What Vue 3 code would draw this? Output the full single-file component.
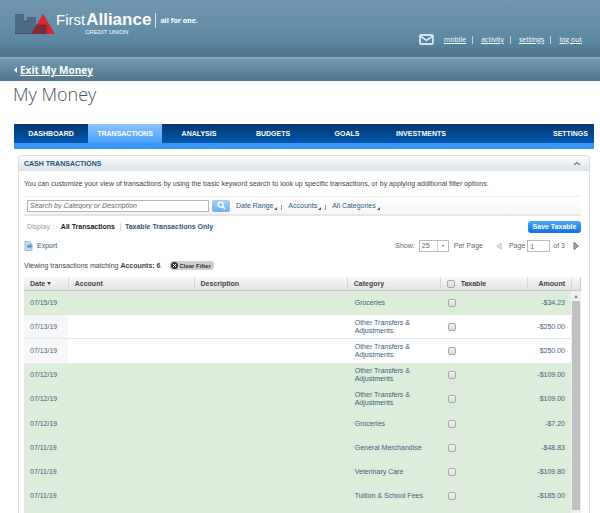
<template>
  <div class="page">
    <header class="top-header">
      <a class="logo" href="#">
        <svg class="logo-mark" viewBox="0 0 40 20" aria-hidden="true">
          <path d="M0 0h9v7h3V3h9v6L17 20H0z" fill="#4b6b82" />
          <path d="M28 0L40 20H16z" fill="#d52535" />
          <path d="M21 11h10v9H16z" fill="#7d2a3a" />
          <path d="M0 19.5h17M9.500 7h3M21 11h10v9" fill="none" stroke="#5c2836" stroke-width="1" stroke-dasharray="1 1" />
        </svg>
        <span class="logo-text">
          <span class="logo-name"><span class="logo-first">First</span><b>Alliance</b></span>
          <span class="logo-sub">CREDIT UNION</span>
        </span>
        <span class="logo-tag">all for one.</span>
      </a>
      <nav class="user-links">
        <svg class="mail" viewBox="0 0 15 11" aria-hidden="true">
          <rect x="1" y="1" width="13" height="9" rx="1" fill="none" stroke="#fff" stroke-width="1.4" />
          <path d="M2 2.500L7.500 6.500L13 2.500" fill="none" stroke="#fff" stroke-width="1.400" />
        </svg>
        <a v-for="link in userLinks" :key="link" href="#">{{ link }}</a>
      </nav>
    </header>

    <div class="exit-bar">
      <svg viewBox="0 0 3 6" aria-hidden="true"><path d="M3 0v6L0 3z" fill="#fff" /></svg>
      <a href="#">Exit My Money</a>
    </div>

    <h1>My Money</h1>

    <main>
      <nav class="tabs">
        <a v-for="tab in tabs" :key="tab" href="#" :class="{ active: tab === activeTab }" @click.prevent="activeTab = tab">{{ tab }}</a>
        <a href="#" class="tab-settings">SETTINGS</a>
      </nav>

      <section class="panel">
        <div class="panel-header">
          <h2>CASH TRANSACTIONS</h2>
          <button aria-label="Collapse">
            <svg viewBox="0 0 8 5"><path d="M1 4L4 1.500L7 4" fill="none" stroke="#5f7f9c" stroke-width="1.300" /></svg>
          </button>
        </div>

        <div class="panel-body">
          <p class="intro">
            You can customize your view of transactions by using the basic keyword search to look up specific
            transactions, or by applying additional filter options.
          </p>

          <div class="filters">
            <input v-model="keyword" type="text" class="search" aria-label="Search" placeholder="Search by Category or Description" />
            <button class="search-btn" aria-label="Search">
              <svg viewBox="0 0 10 10">
                <circle cx="4" cy="4" r="2.800" fill="none" stroke="#fff" stroke-width="1.400" />
                <path d="M6 6L9 9" stroke="#fff" stroke-width="1.600" />
              </svg>
            </button>
            <button v-for="filter in filters" :key="filter" class="filter">
              {{ filter }}<svg viewBox="0 0 3 3"><path d="M3 0v3H0z" fill="#555" /></svg>
            </button>
          </div>

          <div class="display">
            <span class="muted">Display :</span>
            <a href="#" class="current">All Transactions</a>
            <a href="#" class="taxable-only">Taxable Transactions Only</a>
            <button class="save">Save Taxable</button>
          </div>

          <div class="paging">
            <a href="#" class="export">
              <svg viewBox="0 0 9 10" aria-hidden="true">
                <path d="M1 .5h4.500L8 3v6.500H1z" fill="#c5def3" stroke="#82afd6" stroke-width=".8" />
                <path d="M3 4h2.500V2.500L8.500 5.500L5.500 8V6.500H3z" fill="#6397c6" />
              </svg>
              Export
            </a>
            <label for="perPage">Show:</label>
            <span class="select-box">
              <select id="perPage" v-model="perPage">
                <option>25</option>
                <option>50</option>
              </select>
              <svg viewBox="0 0 4 3" aria-hidden="true"><path d="M0 0h4L2 3z" fill="#777" /></svg>
            </span>
            <span class="per-page">Per Page</span>
            <button class="arrow" aria-label="Previous page">
              <svg viewBox="0 0 6 8"><path d="M5 1v6L1 4z" fill="#eee" stroke="#aaa" stroke-width=".8" /></svg>
            </button>
            <label for="pageNumber" class="page-label">Page</label>
            <input id="pageNumber" v-model="pageNumber" type="text" />
            <span class="of">of 3</span>
            <button class="arrow" aria-label="Next page">
              <svg viewBox="0 0 6 8"><path d="M1 .5v7L5.500 4z" fill="#aaa" stroke="#555" stroke-width=".8" /></svg>
            </button>
          </div>

          <div class="viewing">
            <span>Viewing transactions matching <b>Accounts: 6</b>.</span>
            <button class="clear">
              <svg viewBox="0 0 7 7"><circle cx="3.500" cy="3.500" r="3.500" fill="#3b3035" /><path d="M2 2l3 3M5 2L2 5" stroke="#fff" /></svg>
              Clear Filter
            </button>
          </div>

          <div class="grid">
            <table>
              <thead>
                <tr>
                  <th class="col-date">
                    Date<svg viewBox="0 0 4 3"><path d="M0 0h4L2 3z" fill="#444" /></svg>
                  </th>
                  <th class="col-account">Account</th>
                  <th class="col-description">Description</th>
                  <th class="col-category">Category</th>
                  <th class="col-taxable">
                    <label><input v-model="allTaxable" type="checkbox" />Taxable</label>
                  </th>
                  <th class="col-amount">Amount</th>
                </tr>
              </thead>
              <tbody>
                <tr v-for="(row, i) in rows" :key="i" :class="{ green: row.green }">
                  <td>{{ row.date }}</td>
                  <td></td>
                  <td></td>
                  <td class="category">{{ row.category }}</td>
                  <td class="check">
                    <input v-if="row.date" v-model="row.taxable" type="checkbox" aria-label="Taxable" />
                  </td>
                  <td class="amount">{{ row.amount }}</td>
                </tr>
              </tbody>
            </table>
            <div class="scroll">
              <div class="scroll-cap"></div>
              <div class="scroll-up">
                <svg viewBox="0 0 4 3"><path d="M0 3h4L2 0z" fill="#888" /></svg>
              </div>
              <div class="scroll-thumb"></div>
            </div>
          </div>
        </div>
      </section>
    </main>
  </div>
</template>

<script setup>
import { ref } from 'vue'

const userLinks = ['mobile', 'activity', 'settings', 'log out']
const tabs = ['DASHBOARD', 'TRANSACTIONS', 'ANALYSIS', 'BUDGETS', 'GOALS', 'INVESTMENTS']
const filters = ['Date Range', 'Accounts', 'All Categories']

const activeTab = ref('TRANSACTIONS')
const keyword = ref('')
const perPage = ref('25')
const pageNumber = ref('1')
const allTaxable = ref(false)

const rows = ref([
  { date: '07/15/19', category: 'Groceries', amount: '-$34.23', green: true, taxable: false },
  { date: '07/13/19', category: 'Other Transfers & Adjustments', amount: '-$250.00', green: false, taxable: false },
  { date: '07/13/19', category: 'Other Transfers & Adjustments', amount: '$250.00', green: false, taxable: false },
  { date: '07/12/19', category: 'Other Transfers & Adjustments', amount: '-$109.00', green: true, taxable: false },
  { date: '07/12/19', category: 'Other Transfers & Adjustments', amount: '$109.00', green: true, taxable: false },
  { date: '07/12/19', category: 'Groceries', amount: '-$7.20', green: true, taxable: false },
  { date: '07/11/19', category: 'General Merchandise', amount: '-$48.83', green: true, taxable: false },
  { date: '07/11/19', category: 'Veterinary Care', amount: '-$109.80', green: true, taxable: false },
  { date: '07/11/19', category: 'Tuition & School Fees', amount: '-$185.00', green: true, taxable: false },
  { date: '', category: '', amount: '', green: true, taxable: false }
])
</script>

<style>
body {
  margin: 0;
  background: #fff;
}
</style>

<style scoped>
* {
  box-sizing: border-box;
}

.page {
  display: flex;
  flex-direction: column;
  height: 100vh;
  overflow: hidden;
  font-family: 'Liberation Sans', Arial, sans-serif;
  font-size: 7px;
  line-height: 8px;
  color: #444;
}

button,
input,
select {
  margin: 0;
  padding: 0;
  border: 0;
  background: none;
  font: inherit;
  color: inherit;
}

button {
  cursor: pointer;
}

a {
  color: #2f5878;
  text-decoration: none;
}

svg {
  display: block;
}

.top-header {
  display: flex;
  flex: none;
  justify-content: space-between;
  height: 57px;
  padding: 0 18px 0 15px;
  background: linear-gradient(#7196af, #6990a9 40%, #5b87a0 72%, #4f728a);
}

.logo {
  display: flex;
  align-items: flex-start;
  padding-top: 10px;
  color: #fff;
}

.logo-mark {
  width: 40px;
  height: 20px;
  margin-top: 4px;
}

.logo-text {
  display: flex;
  flex-direction: column;
  margin-left: 1px;
  padding-right: 4px;
}

.logo-name {
  font-size: 17px;
  line-height: 19px;
}

.logo-first {
  margin-right: 1px;
  font-size: 15px;
}

.logo-sub {
  padding-left: 29px;
  font-size: 6px;
  line-height: 7px;
}

.logo-tag {
  margin-top: 3px;
  padding-left: 4px;
  border-left: 1px solid #dce6ec;
  font-family: 'Open Sans', sans-serif;
  font-size: 7px;
  font-weight: bold;
  line-height: 15px;
}

.user-links {
  display: flex;
  align-items: center;
  padding-top: 22px;
  font-family: 'Open Sans', sans-serif;
  font-size: 7px;
}

.user-links a {
  color: #fff;
  text-decoration: underline;
}

.user-links a + a {
  margin-left: 6px;
  padding-left: 8px;
  border-left: 1px solid #c4d4de;
}

.mail {
  width: 15px;
  height: 11px;
  margin-right: 10px;
}

.exit-bar {
  display: flex;
  flex: none;
  align-items: center;
  gap: 3px;
  height: 24px;
  padding-left: 14px;
  border-top: 2px solid #89a6b8;
  background: linear-gradient(#7398ae, #50758d);
}

.exit-bar svg {
  width: 3px;
  height: 6px;
}

.exit-bar a {
  color: #fff;
  font-family: 'Open Sans', sans-serif;
  font-size: 10px;
  font-weight: bold;
  line-height: 14px;
  text-decoration: underline;
}

h1 {
  flex: none;
  margin: 0;
  padding-left: 13px;
  height: 43px;
  color: #4a5058;
  font-family: 'Open Sans', sans-serif;
  font-size: 18px;
  font-weight: 300;
  line-height: 26px;
}

main {
  display: flex;
  flex: 1;
  flex-direction: column;
  min-height: 0;
  margin: 0 6px 0 14px;
}

.tabs {
  display: flex;
  flex: none;
  height: 25px;
  border-bottom: 6px solid #3a97fb;
  background: linear-gradient(#02376f, #0057ae);
  font-weight: bold;
  line-height: 19px;
  text-align: center;
}

.tabs a {
  flex: 0 1 74px;
  color: #fff;
}

.tabs .active {
  background: linear-gradient(#8ac4ff, #4a9ff9);
}

.tabs .tab-settings {
  flex: none;
  margin-left: auto;
  padding-right: 6px;
}

.panel {
  display: flex;
  flex: 1;
  flex-direction: column;
  min-height: 0;
  margin: 6px 4px 0 4px;
  border: 1px solid #dcdfe2;
  border-bottom: 0;
  border-radius: 4px 4px 0 0;
}

.panel-header {
  display: flex;
  flex: none;
  align-items: center;
  justify-content: space-between;
  height: 15px;
  padding: 0 8px 0 5px;
  border-radius: 4px 4px 0 0;
  background: linear-gradient(#fdfefe, #d8e3ea);
}

h2 {
  margin: 0;
  color: #2a5072;
  font-size: 7px;
  font-weight: bold;
}

.panel-header svg {
  width: 8px;
  height: 5px;
}

.panel-body {
  display: flex;
  flex: 1;
  flex-direction: column;
  min-height: 0;
  padding: 0 8px 0 5px;
}

.intro {
  margin: 9px 0 8px;
}

.filters {
  display: flex;
  flex: none;
  align-items: center;
  height: 20px;
  padding-left: 3px;
  border-top: 1px solid #eee;
  border-bottom: 2px solid #e6e6e6;
  background: linear-gradient(#fff, #f6f6f6);
}

.search {
  width: 182px;
  height: 12px;
  padding: 0 2px;
  border: 1px solid #b4b4b4;
  background: #fff;
}

.search::placeholder {
  color: #666;
  font-style: italic;
  opacity: 1;
}

.search-btn {
  display: flex;
  align-items: center;
  justify-content: center;
  width: 18px;
  height: 12px;
  margin: 0 6px 0 3px;
  border-radius: 2px;
  background: linear-gradient(#a8d0f5, #72b0ec);
}

.search-btn svg {
  width: 9px;
  height: 9px;
}

.filter {
  display: flex;
  align-items: flex-end;
  gap: 1px;
  color: #2f5878;
}

.filter + .filter {
  margin-left: 4px;
}

.filter + .filter::before {
  width: 1px;
  height: 5px;
  margin-right: 5px;
  background: #8a9aa8;
  content: '';
}

.filter svg {
  width: 3px;
  height: 3px;
}

.display {
  display: flex;
  flex: none;
  align-items: center;
  height: 22px;
  padding-left: 3px;
  font-weight: bold;
}

.muted {
  margin-right: 7px;
  color: #999;
  font-weight: normal;
}

.current {
  color: #222;
}

.taxable-only {
  margin-left: 5px;
  padding-left: 4px;
  border-left: 1px solid #d5dbe0;
}

.save {
  width: 53px;
  height: 12px;
  margin-left: auto;
  border-radius: 3px;
  background: linear-gradient(#4ba6fb, #126fe6);
  color: #fff;
}

.paging {
  display: flex;
  flex: none;
  align-items: center;
  height: 16px;
  padding-right: 2px;
  color: #666;
}

.export {
  display: flex;
  align-items: center;
  gap: 4px;
  margin-right: auto;
}

.export svg {
  width: 9px;
  height: 10px;
}

.select-box {
  display: flex;
  align-items: center;
  width: 30px;
  height: 12px;
  margin: 0 5px 0 4px;
  border: 1px solid #bbb;
}

.select-box select {
  width: 18px;
  height: 10px;
  padding-left: 2px;
  border-right: 1px solid #ccc;
  appearance: none;
}

.select-box svg {
  width: 4px;
  height: 2px;
  margin: 0 auto;
}

.per-page {
  margin-right: 13px;
}

.arrow svg {
  width: 6px;
  height: 8px;
}

.page-label {
  margin-left: 7px;
}

#pageNumber {
  width: 23px;
  height: 12px;
  margin: 0 3px 0 2px;
  padding-left: 2px;
  border: 1px solid #bbb;
}

.of {
  margin-right: 8px;
}

.viewing {
  display: flex;
  flex: none;
  align-items: center;
  gap: 8px;
  height: 23px;
}

.clear {
  display: flex;
  align-items: center;
  gap: 1px;
  height: 9px;
  padding: 0 3px 0 1px;
  border-radius: 3px;
  background: #cfcfcf;
  color: #333;
  font-size: 6px;
  font-weight: bold;
}

.clear svg {
  width: 7px;
  height: 7px;
}

.grid {
  display: flex;
  flex: 1;
  align-items: flex-start;
  min-height: 0;
  overflow: hidden;
}

table {
  flex: 1;
  width: 100%;
  min-width: 0;
  height: 256px;
  border-collapse: separate;
  border-spacing: 0;
  table-layout: fixed;
  color: #3b6280;
}

th {
  height: 14px;
  padding: 0 0 0 6px;
  border-left: 1px solid #cfd8df;
  border-bottom: 1px solid #c6c6c6;
  background: linear-gradient(#fafafa, #e2e2e2);
  color: #444;
  text-align: left;
}

.col-date {
  width: 8%;
  border-left: 0;
}

.col-date svg {
  display: inline-block;
  width: 4px;
  height: 3px;
  margin: 0 0 1px 2px;
}

.col-account {
  width: 23%;
}

.col-description {
  width: 28%;
}

.col-category {
  width: 17%;
}

.col-taxable {
  width: 16%;
}

.col-amount {
  width: 8%;
  padding: 0 6px 0 0;
  text-align: right;
}

.col-taxable label {
  display: flex;
  align-items: center;
  gap: 6px;
}

td {
  padding: 0 6px;
  border-bottom: 1px solid #e3ebf0;
}

tbody tr {
  height: 24px;
}

td:first-child {
  background: #f7f7f7;
}

.green td {
  border-bottom-color: #d8e8dc;
  background: #dceeda;
}

.category {
  padding: 0 8px;
}

.check {
  padding-left: 8px;
}

.amount {
  padding-left: 0;
  text-align: right;
}

input[type='checkbox'] {
  display: block;
  width: 8px;
  height: 8px;
  border: 1px solid #aaa;
  border-radius: 2px;
  background: linear-gradient(#f2f2f2, #dcdcdc);
  appearance: none;
}

input[type='checkbox']:checked {
  background: #4a9ff9;
}

.scroll {
  display: flex;
  flex: none;
  flex-direction: column;
  width: 10px;
  height: 100%;
  padding-bottom: 3px;
  background: #f1f1f1;
}

.scroll-cap {
  height: 14px;
  border-right: 1px solid #ccc;
  border-bottom: 1px solid #c6c6c6;
  border-left: 1px solid #cfd8df;
  background: linear-gradient(#fafafa, #e2e2e2);
}

.scroll-up {
  display: flex;
  align-items: center;
  justify-content: center;
  height: 10px;
}

.scroll-up svg {
  width: 4px;
  height: 3px;
}

.scroll-thumb {
  flex: 1;
  margin: 0 1px;
  background: #c1c1c1;
}
</style>
